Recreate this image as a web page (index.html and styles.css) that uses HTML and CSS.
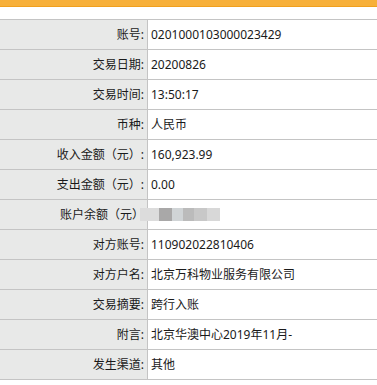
FILE: index.html
```html
<!DOCTYPE html>
<html lang="zh">
<head>
<meta charset="utf-8">
<link rel="stylesheet" href="styles.css">
</head>
<body>
<div class="topbar"></div>
<table class="detail">
  <tr><th>账号:</th><td>0201000103000023429</td></tr>
  <tr><th>交易日期:</th><td>20200826</td></tr>
  <tr><th>交易时间:</th><td>13:50:17</td></tr>
  <tr><th>币种:</th><td>人民币</td></tr>
  <tr><th>收入金额（元）:</th><td>160,923.99</td></tr>
  <tr><th>支出金额（元）:</th><td>0.00</td></tr>
  <tr><th class="blurred-label">账户余额（元）<span class="mosaic-left"></span></th><td><div class="mosaic-row"><span class="m m2"></span><span class="m m3"></span><span class="m m4"></span><span class="m m5"></span><span class="m m6"></span></div></td></tr>
  <tr><th>对方账号:</th><td>110902022810406</td></tr>
  <tr><th>对方户名:</th><td>北京万科物业服务有限公司</td></tr>
  <tr><th>交易摘要:</th><td>跨行入账</td></tr>
  <tr><th>附言:</th><td>北京华澳中心2019年11月-</td></tr>
  <tr><th>发生渠道:</th><td>其他</td></tr>
</table>
</body>
</html>
```
FILE: styles.css
```css
html, body {
  margin: 0;
  padding: 0;
  background: #ffffff;
}
body {
  font-family: "Noto Sans", "Noto Sans CJK SC", sans-serif;
  font-size: 12px;
  color: #1a1a1a;
}
.topbar {
  height: 6px;
  background: #f7b03a;
  border-bottom: 1px solid #f0a01e;
  margin-bottom: 12px;
}
.detail {
  width: 100%;
  border-collapse: collapse;
  border-top: 1px solid #c4c4c4;
}
.detail th,
.detail td {
  border-bottom: 1px solid #c4c4c4;
  padding: 0;
  height: 29px;
  line-height: 29px;
  white-space: nowrap;
}
.detail th {
  width: 144px;
  padding-right: 3px;
  text-align: right;
  font-weight: normal;
  background: #e8e9e8;
  border-right: 1px solid #c4c4c4;
}
.detail td {
  padding-left: 3px;
  text-align: left;
}
.blurred-label {
  position: relative;
}
.mosaic-left {
  position: absolute;
  z-index: 2;
  right: -12px;
  top: 8px;
  width: 19px;
  height: 13px;
  background: #dcdcdc;
}
.mosaic-row {
  display: flex;
  height: 13px;
  margin-left: 8px;
}
.m {
  display: block;
  height: 13px;
}
.m2 { width: 13px; background: #a9a8a8; }
.m3 { width: 11px; background: #d0d4d6; }
.m4 { width: 11px; background: #bbbbbb; }
.m5 { width: 13px; background: #c8c8c8; }
.m6 { width: 13px; background: #d8d8d8; }
```
